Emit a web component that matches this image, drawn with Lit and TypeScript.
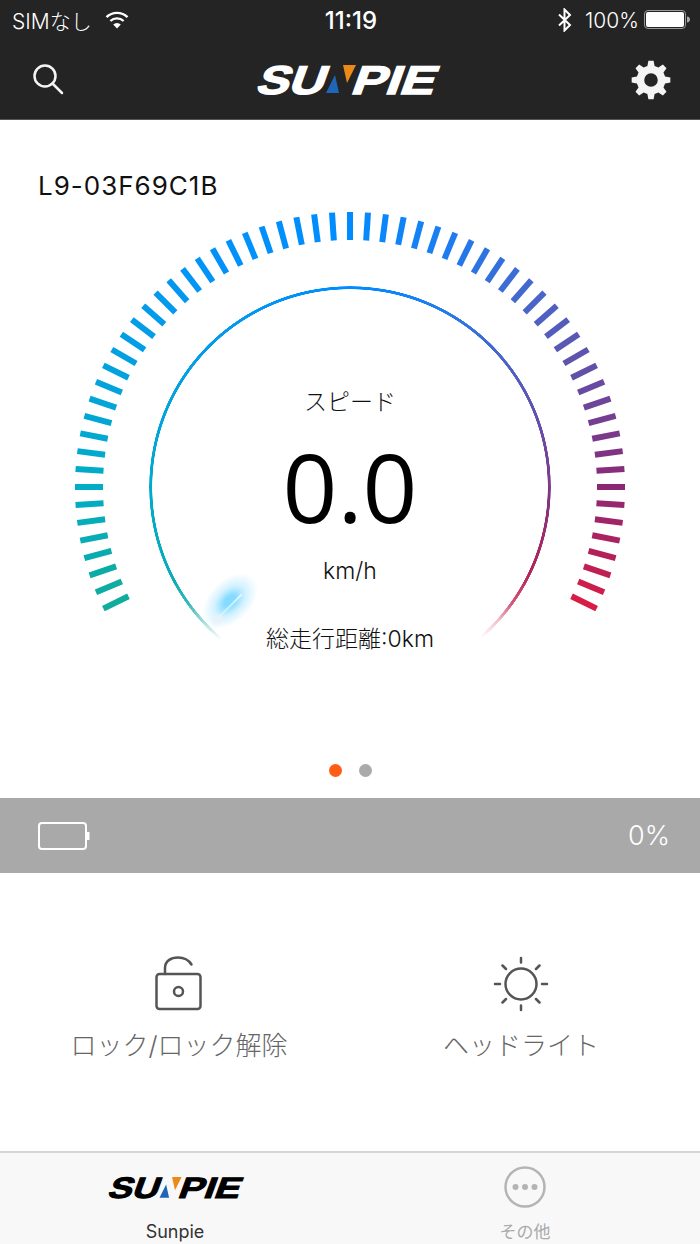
import { LitElement, html, css, svg } from "lit";
import { customElement, property } from "lit/decorators.js";

const STOPS: [number, number[]][] = [
  [-116.25, [16, 172, 156]],
  [-90, [0, 172, 198]],
  [-60, [2, 160, 226]],
  [-30, [0, 146, 250]],
  [0, [0, 140, 255]],
  [22, [30, 125, 240]],
  [45, [74, 100, 200]],
  [65, [100, 78, 165]],
  [90, [140, 40, 115]],
  [105, [180, 32, 90]],
  [116.25, [216, 28, 70]],
];

function colorAt(a: number) {
  for (let i = 0; i < STOPS.length - 1; i++) {
    const [a0, c0] = STOPS[i];
    const [a1, c1] = STOPS[i + 1];
    if (a <= a1) {
      const t = (a - a0) / (a1 - a0);
      const c = c0.map((v, k) => Math.round(v + (c1[k] - v) * t));
      return `rgb(${c.join(",")})`;
    }
  }
  return "rgb(216,28,70)";
}

function gearPath(cx: number, cy: number, outer: number, root: number, hole: number, teeth: number) {
  let d = "";
  const step = (Math.PI * 2) / teeth;
  for (let i = 0; i < teeth; i++) {
    const a = i * step - Math.PI / 2;
    const pts: [number, number][] = [
      [root, a - step * 0.32],
      [outer, a - step * 0.17],
      [outer, a + step * 0.17],
      [root, a + step * 0.32],
    ];
    for (const [r, t] of pts) {
      d += `${d ? "L" : "M"}${(cx + r * Math.cos(t)).toFixed(2)} ${(cy + r * Math.sin(t)).toFixed(2)}`;
    }
  }
  d += `Z M${cx - hole} ${cy}a${hole} ${hole} 0 1 0 ${hole * 2} 0a${hole} ${hole} 0 1 0 ${-hole * 2} 0Z`;
  return d;
}

@customElement("sunpie-logo")
class SunpieLogo extends LitElement {
  static styles = css`
    :host { display: block; }
    svg { display: block; width: 100%; height: auto; overflow: visible; }
    text {
      font-family: "Liberation Sans", sans-serif;
      font-weight: 700;
      font-size: 40px;
      fill: currentColor;
      stroke: currentColor;
      stroke-width: 1.4px;
    }
  `;
  render() {
    return html`<svg viewBox="0 0 184 30">
      <g transform="translate(10 0) skewX(-20)">
        <text x="0" y="29" textLength="68" lengthAdjust="spacingAndGlyphs">SU</text>
        <text x="95" y="29" textLength="83" lengthAdjust="spacingAndGlyphs">PIE</text>
      </g>
      <polygon points="71,28 84,28 80,10" fill="#1f66b8"></polygon>
      <polygon points="88,0 101,0 92,18" fill="#ec8a18"></polygon>
    </svg>`;
  }
}

@customElement("speed-gauge")
class SpeedGauge extends LitElement {
  @property() speed = "0.0";
  @property() odometer = "総走行距離:0km";
  static styles = css`
    :host { display: block; position: relative; width: 700px; height: 459px; }
    .ticks { position: absolute; inset: 0; width: 700px; height: 459px; }
    .ring {
      position: absolute;
      left: 149px;
      top: 85px;
      width: 402px;
      height: 402px;
      border-radius: 50%;
      background: conic-gradient(
        from 220deg,
        rgba(30, 175, 165, 0) 0deg,
        rgba(50, 185, 175, 0.35) 6deg,
        rgba(20, 175, 175, 0.85) 14deg,
        rgb(10, 172, 180) 22deg,
        rgb(0, 170, 205) 50deg,
        rgb(2, 160, 226) 80deg,
        rgb(0, 140, 255) 140deg,
        rgb(30, 125, 240) 165deg,
        rgb(74, 100, 200) 190deg,
        rgb(105, 75, 165) 215deg,
        rgb(135, 50, 125) 235deg,
        rgb(180, 35, 85) 256deg,
        rgba(200, 50, 90, 0.8) 266deg,
        rgba(215, 80, 105, 0.35) 272deg,
        rgba(225, 90, 110, 0) 279deg,
        rgba(225, 90, 110, 0) 360deg
      );
      -webkit-mask: radial-gradient(closest-side, transparent 197.5px, #000 198px, #000 200.8px, transparent 201px);
      mask: radial-gradient(closest-side, transparent 197.5px, #000 198px, #000 200.8px, transparent 201px);
    }
    .glow {
      position: absolute;
      left: 197px;
      top: 379px;
      width: 66px;
      height: 42px;
      border-radius: 50%;
      background: radial-gradient(closest-side, rgba(120, 215, 255, 0.9) 20%, rgba(165, 228, 255, 0.5) 55%, rgba(200, 240, 255, 0) 100%);
      transform: rotate(-45deg);
    }
    .needle {
      position: absolute;
      left: 211px;
      top: 405px;
      width: 36px;
      height: 1.5px;
      background: linear-gradient(90deg, rgba(255, 255, 255, 0.3), rgba(230, 248, 255, 0.9));
      transform: rotate(-45deg);
    }
    .pivot {
      position: absolute;
      left: 209px;
      top: 411px;
      width: 16px;
      height: 16px;
      border-radius: 50%;
      background: radial-gradient(closest-side, rgba(235, 240, 250, 1), rgba(235, 240, 250, 0));
    }
    .readout {
      position: absolute;
      left: 0;
      right: 0;
      top: 186px;
      display: flex;
      flex-direction: column;
      align-items: center;
      color: #111;
    }
    .label { font-size: 23px; line-height: 30px; font-weight: 300; }
    .value {
      font-family: "Open Sans", sans-serif;
      font-size: 96px;
      line-height: 110px;
      font-weight: 400;
      color: #000;
      margin-top: 14px;
    }
    .unit { font-size: 23px; line-height: 30px; margin-top: 15px; font-family: Inter, sans-serif; font-weight: 300; }
    .odo { font-size: 23px; line-height: 30px; margin-top: 38px; font-weight: 300; }
  `;
  render() {
    const cx = 350, cy = 286;
    const ticks = [];
    for (let i = 0; i < 63; i++) {
      const deg = -116.25 + i * 3.75;
      const r = (deg * Math.PI) / 180;
      const s = Math.sin(r), c = Math.cos(r);
      ticks.push(svg`<line x1=${(cx + 247 * s).toFixed(2)} y1=${(cy - 247 * c).toFixed(2)}
        x2=${(cx + 275 * s).toFixed(2)} y2=${(cy - 275 * c).toFixed(2)}
        stroke=${colorAt(deg)} stroke-width="6"></line>`);
    }
    return html`
      <svg class="ticks" viewBox="0 0 700 459">${ticks}</svg>
      <div class="ring"></div>
      <div class="glow"></div>
      <div class="needle"></div>
      <div class="pivot"></div>
      <div class="readout">
        <div class="label">スピード</div>
        <div class="value">${this.speed}</div>
        <div class="unit">km/h</div>
        <div class="odo">${this.odometer}</div>
      </div>
    `;
  }
}

@customElement("app-root")
class AppRoot extends LitElement {
  static styles = css`
    :host {
      display: flex;
      flex-direction: column;
      width: 700px;
      height: 1244px;
      background: #fff;
      overflow: hidden;
      font-family: Inter, "Noto Sans CJK JP", sans-serif;
    }
    .top { background: #242424; color: #fff; height: 120px; flex: none; border-bottom: 1px solid #555; box-sizing: border-box; }
    .status {
      height: 40px;
      display: grid;
      grid-template-columns: 1fr auto 1fr;
      align-items: center;
      padding: 0 10px 0 12px;
      font-size: 21px;
      font-weight: 300;
    }
    .status-left { display: flex; align-items: center; gap: 13px; }
    .status-right { display: flex; align-items: center; justify-content: flex-end; gap: 12px; }
    .time { font-weight: 500; font-size: 24px; }
    .batt-group { display: flex; align-items: center; gap: 5px; }
    .wifi { width: 24px; height: 18px; display: block; }
    .bt { width: 16px; height: 24px; display: block; }
    .sbatt { width: 46px; height: 20px; display: block; }
    .nav {
      height: 79px;
      display: flex;
      align-items: center;
      justify-content: space-between;
      padding: 0 29px 4px 32px;
    }
    .search { width: 32px; height: 32px; display: block; }
    .gear { width: 40px; height: 40px; display: block; }
    .nav-logo { width: 184px; margin-left: -2px; }
    main { flex: 1; display: flex; flex-direction: column; min-height: 0; }
    .device { font-size: 26px; letter-spacing: 1px; line-height: 30px; color: #111; margin: 51px 0 0 38px; }
    .dots { display: flex; justify-content: center; gap: 17px; margin-top: 104px; }
    .dot { width: 13px; height: 13px; border-radius: 50%; background: #aaa; }
    .dot.on { background: #ff5c14; }
    .battery {
      height: 75px;
      margin-top: 21px;
      flex: none;
      background: #a9a9a9;
      display: flex;
      align-items: center;
      justify-content: space-between;
      padding: 0 30px 0 38px;
      color: #fff;
      font-size: 27px;
      font-weight: 300;
    }
    .bbatt { width: 52px; height: 30px; display: block; }
    .actions { flex: 1; display: grid; grid-template-columns: 358px 326px; padding-top: 83px; }
    .action { display: flex; flex-direction: column; align-items: center; gap: 17px; color: #666; font-size: 26px; font-weight: 300; line-height: 34px; }
    .action svg { width: 60px; height: 56px; display: block; }
    footer {
      flex: none;
      height: 93px;
      box-sizing: border-box;
      background: #f8f8f8;
      border-top: 2px solid #d4d4d4;
      display: grid;
      grid-template-columns: 350px 350px;
    }
    .tab { display: flex; flex-direction: column; align-items: center; font-size: 18px; line-height: 22px; color: #333; }
    .tab-logo { width: 136px; margin-top: 24px; height: 26px; color: #000; }
    .tab1 span { margin-top: 18px; }
    .tab2 { color: #aaa; font-size: 17px; }
    .tab2 svg { width: 44px; height: 44px; display: block; margin-top: 12px; }
    .tab2 span { margin-top: 12px; }
  `;
  render() {
    return html`
      <header class="top">
        <div class="status">
          <div class="status-left">
            <span>SIMなし</span>
            <svg class="wifi" viewBox="0 0 24 18" fill="none" stroke="#fff" stroke-width="2.4">
              <path d="M1.5 6.2a15 15 0 0 1 21 0"></path>
              <path d="M5.4 10a9.6 9.6 0 0 1 13.2 0"></path>
              <path d="M12 17.6 8.2 13.6a5.4 5.4 0 0 1 7.6 0z" fill="#fff" stroke="none"></path>
            </svg>
          </div>
          <div class="time">11:19</div>
          <div class="status-right">
            <svg class="bt" viewBox="0 0 16 24" fill="none" stroke="#fff" stroke-width="2">
              <path d="M2 6.5 13 17l-5.5 5.5v-21L13 7 2 17.5"></path>
            </svg>
            <div class="batt-group">
              <span>100%</span>
              <svg class="sbatt" viewBox="0 0 46 20">
                <rect x="0.5" y="0.5" width="41" height="18" rx="3.5" fill="none" stroke="#999"></rect>
                <rect x="2" y="2" width="38" height="15" rx="2" fill="#fff"></rect>
                <path d="M43 6.5c2 .3 3 1.400 3 3s-1 2.700-3 3z" fill="#aaa"></path>
              </svg>
            </div>
          </div>
        </div>
        <div class="nav">
          <svg class="search" viewBox="0 0 32 32" fill="none" stroke="#f4f4f4" stroke-width="2.5">
            <circle cx="13" cy="12" r="10.500"></circle>
            <path d="M20.500 19.500 30 29" stroke-linecap="round"></path>
          </svg>
          <sunpie-logo class="nav-logo"></sunpie-logo>
          <svg class="gear" viewBox="0 0 40 40">
            <path fill="#f4f4f4" fill-rule="evenodd" d=${gearPath(20, 20, 19.5, 14.5, 6.8, 8)}></path>
          </svg>
        </div>
      </header>
      <main>
        <div class="device">L9-03F69C1B</div>
        <speed-gauge></speed-gauge>
        <div class="dots"><div class="dot on"></div><div class="dot"></div></div>
        <section class="battery">
          <svg class="bbatt" viewBox="0 0 52 30" fill="none" stroke="#fff" stroke-width="2">
            <rect x="1" y="2" width="47" height="26" rx="3"></rect>
            <path d="M50 11v8" stroke-width="3"></path>
          </svg>
          <span>0%</span>
        </section>
        <section class="actions">
          <div class="action">
            <svg viewBox="0 0 60 56" fill="none" stroke="#555" stroke-width="2.5">
              <rect x="7.500" y="18" width="44" height="35" rx="3"></rect>
              <circle cx="29.500" cy="35.500" r="4.500"></circle>
              <path d="M16 18v-6C16 5 22 1.500 29 1.500c6 0 11 3 13.500 7" stroke-linecap="round"></path>
            </svg>
            <span>ロック/ロック解除</span>
          </div>
          <div class="action">
            <svg viewBox="0 0 60 56" fill="none" stroke="#555" stroke-width="2.500" stroke-linecap="round">
              <circle cx="30" cy="28" r="15.500"></circle>
              <path d="M30 2v4.500M30 49.500V54M4 28h5M51 28h5M11.500 9.500l3.500 3.500M48.500 9.500 45 13M11.500 46.500l3.500-3.500M48.500 46.500 45 43"></path>
            </svg>
            <span>ヘッドライト</span>
          </div>
        </section>
      </main>
      <footer>
        <div class="tab tab1">
          <sunpie-logo class="tab-logo"></sunpie-logo>
          <span>Sunpie</span>
        </div>
        <div class="tab tab2">
          <svg viewBox="0 0 44 44">
            <circle cx="22" cy="22" r="19.500" fill="none" stroke="#b4b4b4" stroke-width="2.500"></circle>
            <circle cx="12.500" cy="22" r="3" fill="#b4b4b4"></circle>
            <circle cx="22" cy="22" r="3" fill="#b4b4b4"></circle>
            <circle cx="31.500" cy="22" r="3" fill="#b4b4b4"></circle>
          </svg>
          <span>その他</span>
        </div>
      </footer>
    `;
  }
}
